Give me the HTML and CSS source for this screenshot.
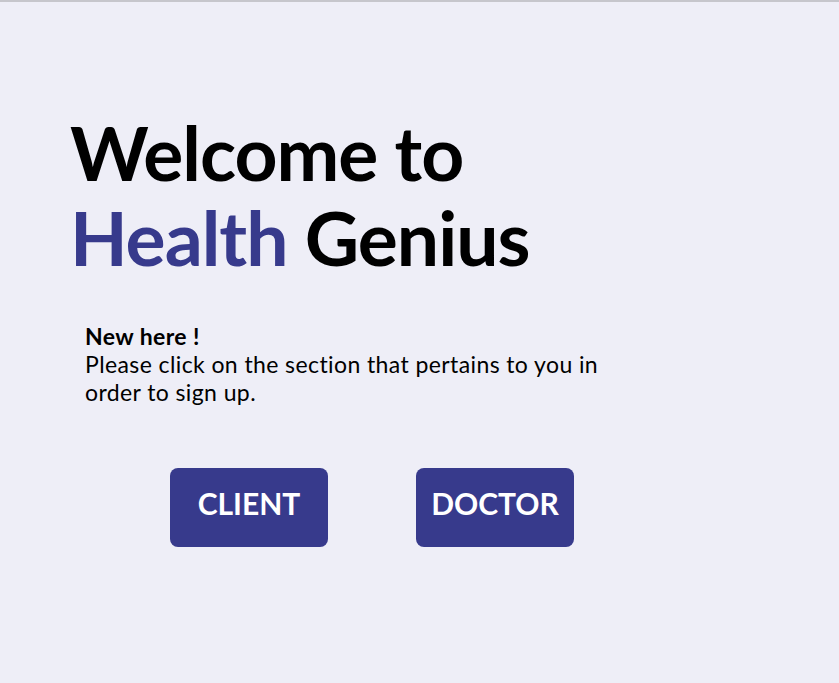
FILE: index.html
```html
<!DOCTYPE html>
<html lang="en">
<head>
<meta charset="utf-8">
<title>Health Genius</title>
<link rel="stylesheet" href="styles.css">
</head>
<body>
<div class="topbar"></div>
<main class="page">
  <h1 class="title">Welcome to<br><span class="brand">Health</span> Genius</h1>
  <div class="intro">
    <p class="intro-head">New here !</p>
    <p class="intro-text">Please click on the section that pertains to you in order to sign up.</p>
  </div>
  <div class="actions">
    <button class="btn">CLIENT</button>
    <button class="btn">DOCTOR</button>
  </div>
</main>
</body>
</html>
```

FILE: styles.css
```css
html, body {
  margin: 0;
  padding: 0;
}
body {
  background: #eeeef7;
  font-family: Lato, "Noto Sans", sans-serif;
  color: #000;
  height: 683px;
  overflow: hidden;
}
.topbar {
  height: 2px;
  background: #c6c6cc;
}
.page {
  padding: 108px 0 0 70px;
}
.title {
  margin: 0;
  font-size: 75px;
  line-height: 85px;
  font-weight: 700;
  letter-spacing: -1px;
}
.brand {
  color: #373a8c;
}
.intro {
  margin: 42px 0 0 15px;
  width: 530px;
  font-size: 23px;
  line-height: 28px;
  letter-spacing: 0.4px;
}
.intro p {
  margin: 0;
}
.intro-head {
  font-weight: 700;
}
.actions {
  display: flex;
  gap: 88px;
  margin: 62px 0 0 100px;
}
.btn {
  width: 158px;
  height: 79px;
  border: none;
  border-radius: 8px;
  background: #373a8c;
  color: #fff;
  font-family: Lato, "Noto Sans", sans-serif;
  font-size: 30px;
  font-weight: 700;
  padding: 0 0 9px;
  cursor: pointer;
}
```
